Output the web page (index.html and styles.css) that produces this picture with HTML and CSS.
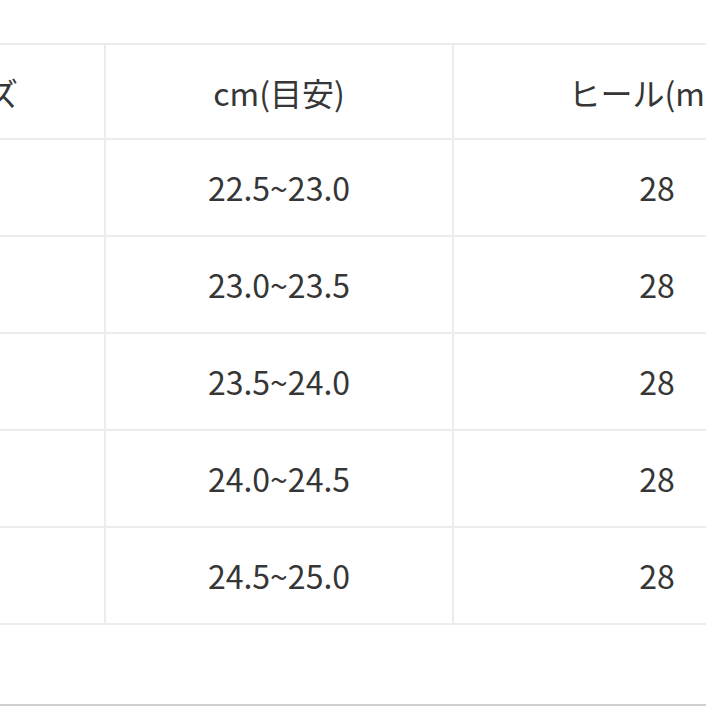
FILE: index.html
```html
<!DOCTYPE html>
<html lang="ja">
<head>
<meta charset="utf-8">
<link rel="stylesheet" href="styles.css">
</head>
<body>
<div class="page">
  <div class="size-table">
    <div class="cell head">サイズ</div>
    <div class="cell head">cm(目安)</div>
    <div class="cell head">ヒール(mm)</div>

    <div class="cell">S</div>
    <div class="cell">22.5~23.0</div>
    <div class="cell">28</div>

    <div class="cell">M</div>
    <div class="cell">23.0~23.5</div>
    <div class="cell">28</div>

    <div class="cell">L</div>
    <div class="cell">23.5~24.0</div>
    <div class="cell">28</div>

    <div class="cell">XL</div>
    <div class="cell">24.0~24.5</div>
    <div class="cell">28</div>

    <div class="cell">XXL</div>
    <div class="cell">24.5~25.0</div>
    <div class="cell">28</div>
  </div>
  <div class="spacer"></div>
</div>
</body>
</html>
```
FILE: styles.css
```css
html, body {
  margin: 0;
  padding: 0;
  background: #ffffff;
  overflow: hidden;
}
.page {
  width: 706px;
  height: 706px;
  overflow: hidden;
  padding-top: 43px;
  box-sizing: border-box;
  font-family: "Noto Sans CJK JP", "Noto Sans", sans-serif;
  color: #363636;
}
.size-table {
  display: grid;
  grid-template-columns: 269px 348px 408px;
  grid-template-rows: 95px repeat(5, 97px);
  width: 1027px;
  margin-left: -165px;
  border-top: 2px solid #ececec;
  border-left: 2px solid #ececec;
}
.cell {
  box-sizing: border-box;
  border-right: 2px solid #ececec;
  border-bottom: 2px solid #ececec;
  display: flex;
  align-items: center;
  justify-content: center;
  font-size: 32px;
  line-height: 1;
  white-space: nowrap;
  padding-bottom: 2px;
}
.cell.head {
  padding-bottom: 0;
}
.spacer {
  margin-top: 79px;
  border-top: 2px solid #cfcfcf;
}
```
